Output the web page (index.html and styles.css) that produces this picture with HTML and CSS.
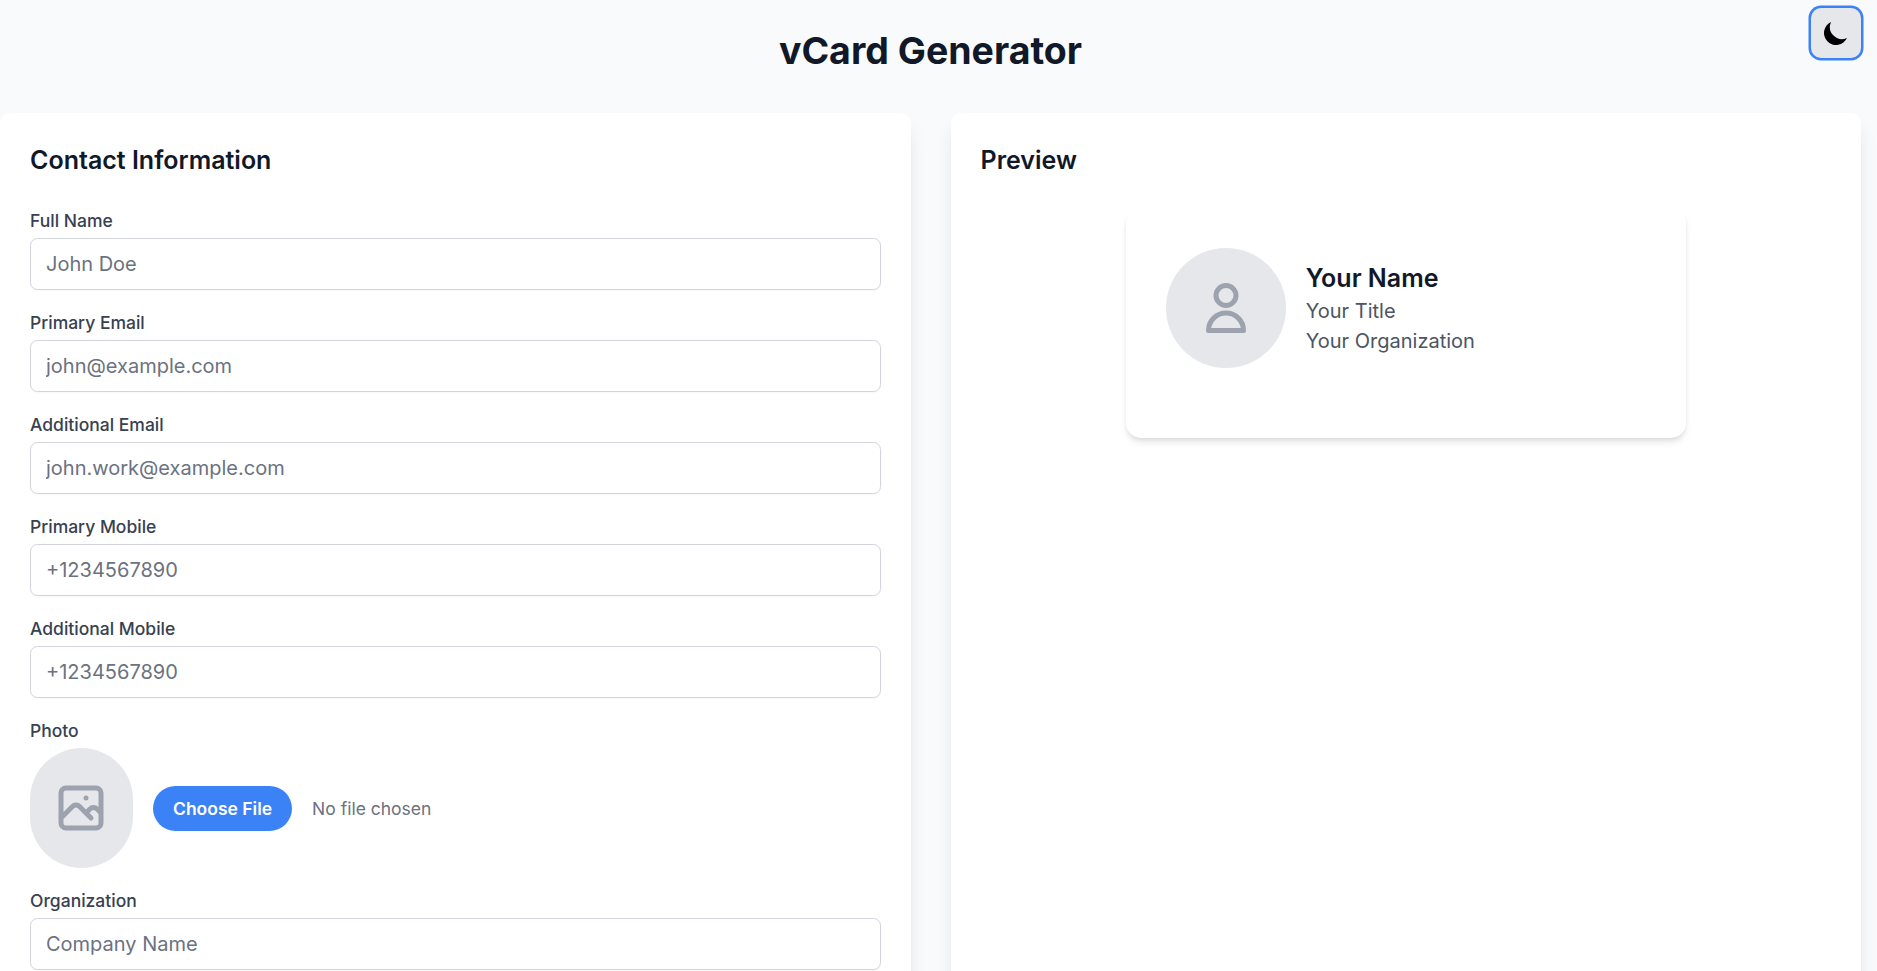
FILE: index.html
```html
<!DOCTYPE html>
<html lang="en">
<head>
<meta charset="utf-8">
<title>vCard Generator</title>
<link rel="stylesheet" href="styles.css">
</head>
<body>
<div class="page">
  <button class="theme-toggle" type="button" aria-label="Toggle theme">
    <svg class="moon" viewBox="0 0 20 20"><path d="M17.293 13.293A8 8 0 016.707 2.707a8.001 8.001 0 1010.586 10.586z"/></svg>
  </button>
  <h1 class="title">vCard Generator</h1>
  <main class="columns">
    <section class="panel">
      <h2 class="heading">Contact Information</h2>
      <form class="form">
        <div class="field"><label class="label">Full Name</label><input class="input" placeholder="John Doe"></div>
        <div class="field"><label class="label">Primary Email</label><input class="input" placeholder="john@example.com"></div>
        <div class="field"><label class="label">Additional Email</label><input class="input" placeholder="john.work@example.com"></div>
        <div class="field"><label class="label">Primary Mobile</label><input class="input" placeholder="+1234567890"></div>
        <div class="field"><label class="label">Additional Mobile</label><input class="input" placeholder="+1234567890"></div>
        <div class="field">
          <label class="label">Photo</label>
          <div class="photo-row">
            <div class="photo">
              <svg class="icon" viewBox="0 0 24 24"><path d="M4 16l4.586-4.586a2 2 0 012.828 0L16 16m-2-2l1.586-1.586a2 2 0 012.828 0L20 14m-6-6h.01M6 20h12a2 2 0 002-2V6a2 2 0 00-2-2H6a2 2 0 00-2 2v12a2 2 0 002 2z"/></svg>
            </div>
            <button class="choose" type="button">Choose File</button>
            <span class="file-status">No file chosen</span>
          </div>
        </div>
        <div class="field"><label class="label">Organization</label><input class="input" placeholder="Company Name"></div>
      </form>
    </section>
    <section class="panel">
      <h2 class="heading">Preview</h2>
      <div class="card">
        <div class="avatar">
          <svg class="icon" viewBox="0 0 24 24"><path d="M16 7a4 4 0 11-8 0 4 4 0 018 0zM12 14a7 7 0 00-7 7h14a7 7 0 00-7-7z"/></svg>
        </div>
        <div class="person">
          <h3 class="name">Your Name</h3>
          <p class="detail">Your Title</p>
          <p class="detail">Your Organization</p>
        </div>
      </div>
    </section>
  </main>
</div>
</body>
</html>
```
FILE: styles.css
```css
* { box-sizing: border-box; margin: 0; padding: 0; }
html { font-size: 20px; }
body {
  height: 100vh;
  overflow: hidden;
  background: #f9fafb;
  color: #111827;
  font-family: Inter, sans-serif;
  line-height: 1.5;
}
.page { width: 1861px; padding-top: 28px; }
.theme-toggle {
  position: absolute;
  top: 8px;
  left: 1811px;
  width: 50px;
  height: 50px;
  display: flex;
  align-items: center;
  justify-content: center;
  border: 0;
  border-radius: 10px;
  background: #e5e7eb;
  box-shadow: 0 0 0 2.5px #3b82f6;
}
.moon { width: 30px; height: 30px; fill: #000; }
.title {
  margin-bottom: 40px;
  font-size: 37.5px;
  line-height: 45px;
  font-weight: 700;
  text-align: center;
}
.columns { display: grid; grid-template-columns: 1fr 1fr; gap: 40px; }
.panel {
  padding: 30px;
  border-radius: 10px;
  background: #fff;
  box-shadow: 0 12.5px 18.75px -3.75px rgba(0,0,0,.1), 0 5px 7.5px -5px rgba(0,0,0,.1);
}
.heading { margin-bottom: 30px; font-size: 25px; line-height: 35px; font-weight: 600; }
.form { display: flex; flex-direction: column; gap: 20px; }
.label {
  display: block;
  margin-bottom: 5px;
  color: #374151;
  font-size: 17.5px;
  line-height: 25px;
  font-weight: 500;
}
.input {
  display: block;
  width: 100%;
  height: 52px;
  padding: 10px 15px;
  border: 1px solid #d1d5db;
  border-radius: 7.5px;
  background: #fff;
  box-shadow: 0 1px 2px rgba(0,0,0,.03);
  font: 20px/30px Inter, sans-serif;
}
.input::placeholder { color: #6b7280; }
.photo-row { display: flex; align-items: center; gap: 20px; }
.photo, .avatar {
  display: flex;
  align-items: center;
  justify-content: center;
  height: 120px;
  border-radius: 9999px;
  background: #e5e7eb;
}
.photo { width: 103px; padding-right: 1px; }
.avatar { width: 120px; }
.icon {
  width: 60px;
  height: 60px;
  fill: none;
  stroke: #9ca3af;
  stroke-width: 2;
  stroke-linecap: round;
  stroke-linejoin: round;
}
.choose {
  height: 45px;
  padding: 0 20px;
  border: 0;
  border-radius: 9999px;
  background: #3b82f6;
  color: #fff;
  font: 600 17.5px/25px Inter, sans-serif;
}
.file-status { color: #6b7280; font-size: 17.5px; line-height: 25px; }
.card {
  display: flex;
  align-items: flex-start;
  gap: 20px;
  width: 560px;
  height: 230px;
  margin: 0 auto;
  padding: 40px;
  border-radius: 15px;
  background: #fff;
  box-shadow: 0 5px 7.5px -1.25px rgba(0,0,0,.1), 0 2.5px 5px -2.5px rgba(0,0,0,.1);
}
.person { display: flex; flex-direction: column; justify-content: center; height: 120px; }
.name { font-size: 25px; line-height: 35px; font-weight: 600; }
.detail { color: #4b5563; font-size: 20px; line-height: 30px; }
```
